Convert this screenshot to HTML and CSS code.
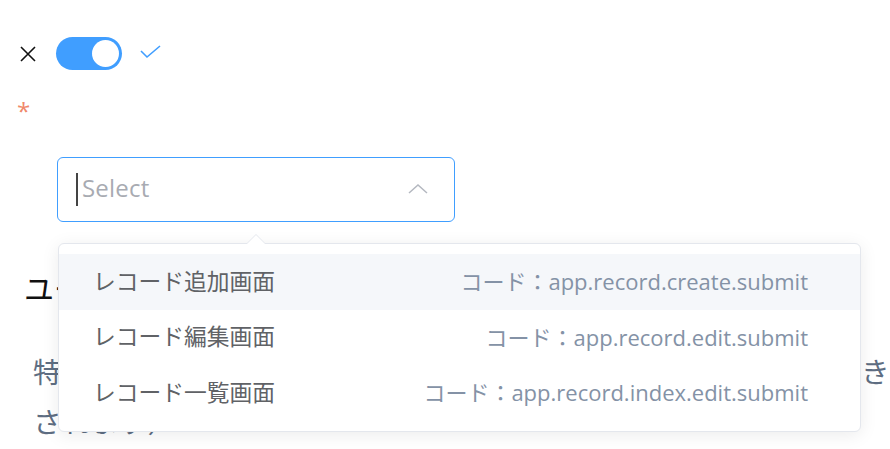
FILE: index.html
```html
<!DOCTYPE html>
<html lang="ja">
<head>
<meta charset="utf-8">
<title>Select</title>
<link rel="stylesheet" href="styles.css">
</head>
<body>
<div class="page">
  <div class="switch-row">
    <svg class="icon-close" width="16" height="16" viewBox="0 0 16 16"><path d="M1 1 L15 15 M15 1 L1 15" stroke="#111" stroke-width="1.6" fill="none"/></svg>
    <span class="switch"><span class="knob"></span></span>
    <svg class="icon-check" width="22" height="16" viewBox="0 0 22 16"><path d="M1 6 L7 12 L20 1" stroke="#409eff" stroke-width="1.6" fill="none"/></svg>
  </div>
  <div class="required">*</div>
  <div class="select-wrap">
    <div class="select">
      <span class="caret"></span><span class="placeholder">Select</span>
      <svg class="arrow" width="20" height="10" viewBox="0 0 20 10"><path d="M1 9 L10 1 L19 9" stroke="#b4b8c0" stroke-width="1.5" fill="none"/></svg>
    </div>
    <div class="dropdown">
      <span class="pointer"></span>
      <ul class="options">
        <li class="option hover"><span class="opt-label">レコード追加画面</span><span class="opt-code">コード：app.record.create.submit</span></li>
        <li class="option"><span class="opt-label">レコード編集画面</span><span class="opt-code">コード：app.record.edit.submit</span></li>
        <li class="option"><span class="opt-label">レコード一覧画面</span><span class="opt-code">コード：app.record.index.edit.submit</span></li>
      </ul>
    </div>
  </div>
  <h3 class="heading">ユーザー操作イベント</h3>
  <p class="desc">特定の画面で保存ボタンが押されたタイミングで、処理を実行でき<br>されます）</p>
</div>
</body>
</html>
```
FILE: styles.css
```css
html, body {
  margin: 0;
  padding: 0;
  background: #fff;
  overflow: hidden;
  height: 449px;
}
body {
  font-family: "Open Sans", "Noto Sans CJK JP", sans-serif;
}
.page {
  padding-top: 37px;
}
.switch-row {
  display: flex;
  align-items: center;
  height: 33px;
  padding-left: 20px;
}
.icon-close {
  display: block;
  margin-right: 20px;
}
.switch {
  position: relative;
  width: 66px;
  height: 33px;
  border-radius: 17px;
  background: #409eff;
  display: block;
}
.knob {
  position: absolute;
  top: 3px;
  right: 3px;
  width: 27px;
  height: 27px;
  border-radius: 50%;
  background: #fff;
}
.icon-check {
  display: block;
  margin-left: 18px;
  margin-top: -2px;
}
.required {
  margin: 26px 0 0 17px;
  font-size: 24px;
  line-height: 30px;
  height: 30px;
  color: #f0886a;
}
.select-wrap {
  position: relative;
  margin: 31px 0 0 57px;
  width: 398px;
}
.select {
  box-sizing: border-box;
  height: 65px;
  border: 1.5px solid #409eff;
  border-radius: 6px;
  display: flex;
  align-items: center;
  padding-left: 18px;
  padding-right: 26px;
}
.caret {
  width: 2px;
  height: 33px;
  background: #444;
  margin-right: 4px;
}
.placeholder {
  flex: 1;
  font-size: 24px;
  color: #a8abb2;
  letter-spacing: 0.2px;
  padding-bottom: 4px;
}
.arrow {
  display: block;
  margin-top: -2px;
}
.dropdown {
  position: absolute;
  top: 86px;
  left: 1px;
  width: 803px;
  box-sizing: border-box;
  background: #fff;
  border: 1px solid #e4e7ed;
  border-radius: 6px;
  box-shadow: 0 3px 18px rgba(0, 0, 0, 0.08);
  z-index: 10;
}
.pointer {
  position: absolute;
  top: -10px;
  left: 187px;
  width: 0;
  height: 0;
  border-left: 10px solid transparent;
  border-right: 10px solid transparent;
  border-bottom: 10px solid #e4e7ed;
}
.pointer::after {
  content: "";
  position: absolute;
  top: 1px;
  left: -9px;
  border-left: 9px solid transparent;
  border-right: 9px solid transparent;
  border-bottom: 9px solid #fff;
}
.options {
  list-style: none;
  margin: 0;
  padding: 10px 0;
}
.option {
  box-sizing: border-box;
  height: 55.5px;
  display: flex;
  align-items: center;
  justify-content: space-between;
  padding: 0 52px 3px 34px;
}
.option.hover {
  background: #f5f7fa;
}
.opt-label {
  font-size: 22.75px;
  color: #606266;
}
.opt-code {
  font-size: 22px;
  color: #8492a6;
}
.heading {
  margin: 45px 0 0 24px;
  font-size: 30px;
  font-weight: normal;
  line-height: 44px;
  color: #111;
}
.desc {
  margin: 36px 0 0 33px;
  font-size: 28.6px;
  line-height: 50px;
  color: #5e6d82;
  white-space: nowrap;
}
```
